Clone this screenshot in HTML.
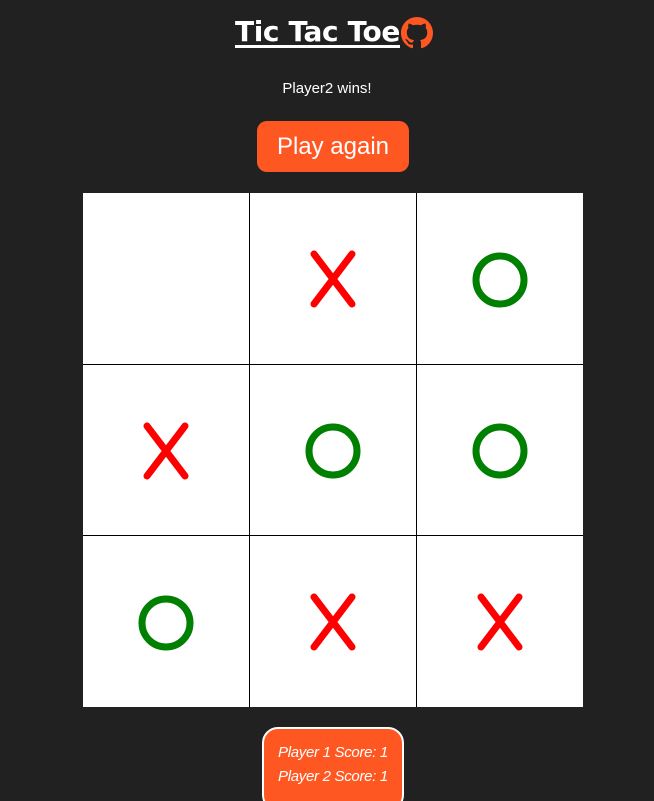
<!DOCTYPE html>
<html style="overflow:hidden;height:801px"><head><style>
body{margin:0;width:654px;height:801px;background:#212121;overflow:hidden;font-family:"Liberation Sans",sans-serif;position:relative}
.t{position:absolute;left:0;width:654px;text-align:center;color:#fff}
</style></head><body>
<div style="position:absolute;left:235px;top:15px;width:162px;text-align:center;color:#fff;font-size:28px;font-weight:bold;text-decoration:underline;text-decoration-thickness:3px;text-underline-offset:4px;font-family:'DejaVu Sans',sans-serif;letter-spacing:-0.4px;white-space:nowrap">Tic Tac Toe</div>
<svg style="position:absolute;left:401px;top:17px" width="32" height="32" viewBox="0 0 16 16"><path fill="#ff5722" d="M8 0C3.58 0 0 3.58 0 8c0 3.540 2.290 6.530 5.470 7.590.4.07.55-.17.55-.38 0-.19-.01-.82-.01-1.490-2.010.37-2.530-.49-2.690-.94-.09-.23-.48-.94-.82-1.130-.28-.15-.68-.52-.01-.53.63-.01 1.080.58 1.230.82.72 1.210 1.870.87 2.330.66.07-.52.28-.87.51-1.070-1.780-.2-3.640-.89-3.640-3.950 0-.87.31-1.590.82-2.150-.08-.2-.36-1.020.08-2.120 0 0 .67-.21 2.200.82.64-.18 1.320-.27 2-.27.68 0 1.360.09 2 .27 1.530-1.040 2.200-.82 2.200-.82.44 1.100.16 1.920.08 2.120.51.56.82 1.270.82 2.150 0 3.070-1.870 3.750-3.650 3.950.29.25.54.73.54 1.480 0 1.070-.01 1.930-.01 2.200 0 .21.15.46.55.38A8.013 8.013 0 0016 8c0-4.420-3.580-8-8-8z"/></svg>
<div class="t" style="top:80px;font-size:15px">Player2 wins!</div>
<div style="position:absolute;left:257px;top:121px;width:152px;height:51px;background:#ff5722;border-radius:10px;color:#fff;font-size:24px;text-align:center;line-height:52px">Play again</div>
<svg style="position:absolute;left:0;top:0" width="654" height="801">
<rect x="83" y="193" width="500" height="514" fill="#fff"/>
<g stroke="#000" stroke-width="1"><line x1="249.5" y1="193" x2="249.5" y2="707"/><line x1="416.5" y1="193" x2="416.5" y2="707"/><line x1="83" y1="364.5" x2="583" y2="364.5"/><line x1="83" y1="535.5" x2="583" y2="535.5"/></g>
<defs><g id="x" stroke="#f00" stroke-width="7" stroke-linecap="round"><line x1="-19" y1="-25" x2="19" y2="25"/><line x1="19" y1="-25" x2="-19" y2="25"/></g>
<circle id="o" r="24" fill="none" stroke="#008000" stroke-width="7"/></defs>
<use href="#x" x="333" y="279"/><use href="#o" x="500" y="280"/>
<use href="#x" x="166" y="451"/><use href="#o" x="333" y="451"/><use href="#o" x="500" y="451"/>
<use href="#o" x="166" y="623"/><use href="#x" x="333" y="622"/><use href="#x" x="500" y="622"/>
</svg>
<div style="position:absolute;left:262px;top:727px;width:138px;height:68px;background:#ff5722;border:2px solid #fff;border-radius:16px;color:#fff;font-style:italic;font-size:15px;text-align:center;line-height:24px;padding-top:12px;box-sizing:content-box;white-space:nowrap;letter-spacing:-0.3px">Player 1 Score: 1<br>Player 2 Score: 1</div>
</body></html>
